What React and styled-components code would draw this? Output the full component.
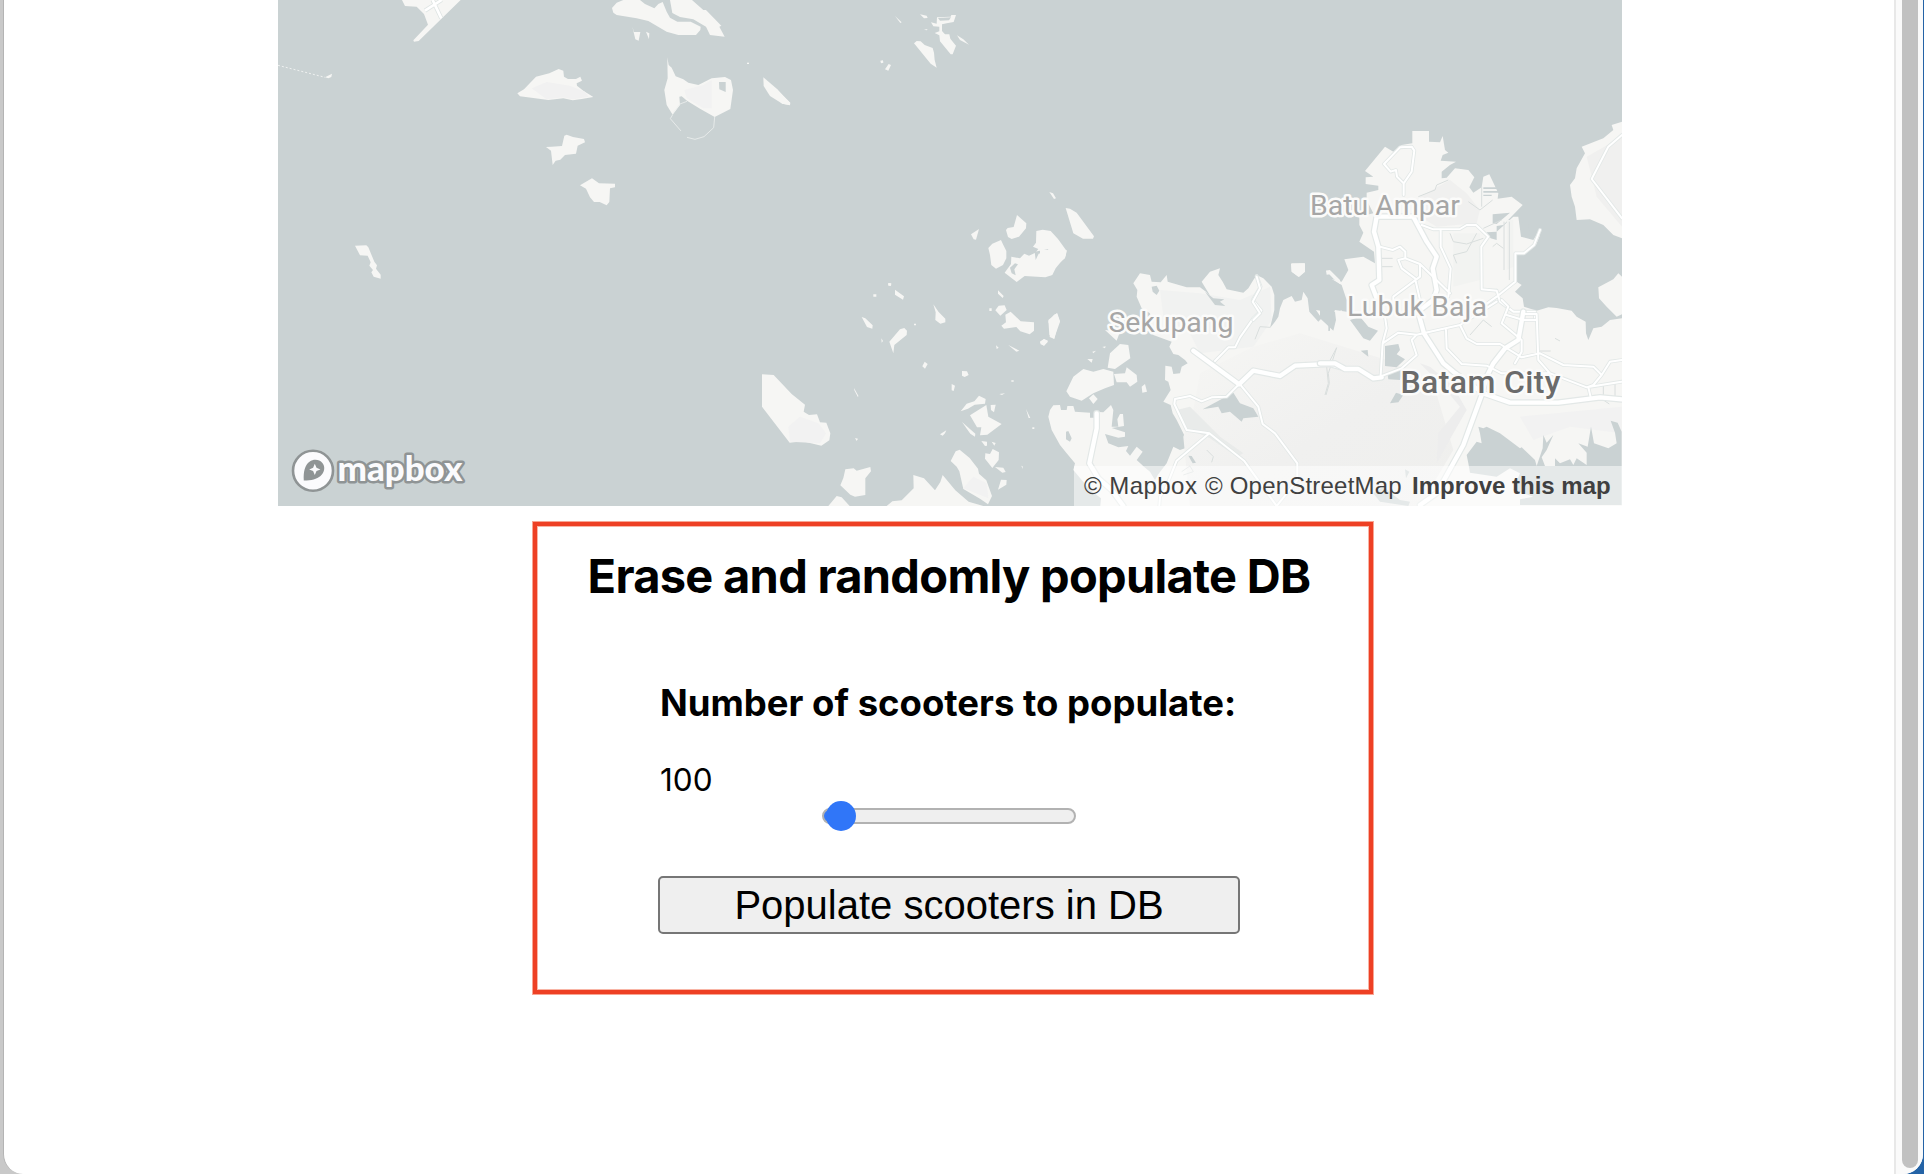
import React, { useState } from "react";
import styled, { createGlobalStyle } from "styled-components";

const GlobalStyle = createGlobalStyle`
  *, *::before, *::after { box-sizing: border-box; }
  html, body { margin: 0; padding: 0; }
  body { background: #c6c8c9; overflow: hidden; }
`;

const Desktop = styled.div`
  height: 1174px;
  padding: 0 1px 0 3px;
  background: linear-gradient(90deg, #c9c9c9 0 50%, #2463a6 50%);
`;

const Window = styled.div`
  display: flex;
  height: 100%;
  overflow: hidden;
  background: #fff;
  border-left: 1px solid #b4b4b4;
  border-radius: 0 0 20px 20px;
  font-family: Inter, "Liberation Sans", sans-serif;
  color: #000;
`;

const Page = styled.main`
  flex: 1;
  display: flex;
  flex-direction: column;
  align-items: center;
  padding-left: 2px;
`;

const ScrollTrack = styled.div`
  display: flex;
  flex-direction: column;
  width: 29px;
  padding: 0 5px 6px 6px;
  border-left: 2px solid #e8e8e8;
  background: #fafafa;
`;

const ScrollThumb = styled.div`
  flex: 1;
  background: #c1c1c1;
  border-radius: 0 0 8px 8px;
`;

const MapFrame = styled.section`
  position: relative;
  width: 1344px;
  height: 506px;
  overflow: hidden;
  background: #cad2d3;
`;

const MapDrawing = styled.svg`
  display: block;
  width: 1344px;
  height: 506px;
`;

const PlaceName = styled.text`
  font-family: Roboto, "Liberation Sans", sans-serif;
  font-size: ${(p) => (p.$city ? 32 : 28.5)}px;
  font-weight: ${(p) => (p.$city ? 500 : 400)};
  fill: ${(p) => (p.$city ? "#6b6b6b" : "#a6a6a6")};
  stroke: #fbfbfa;
  stroke-width: 5px;
  stroke-linejoin: round;
  paint-order: stroke;
`;

const Wordmark = styled.text`
  font-family: Lato, sans-serif;
  font-size: 34.5px;
  font-weight: 900;
  fill: #fbfbfd;
  stroke: #8f9495;
  stroke-width: 5px;
  stroke-linejoin: round;
  paint-order: stroke;
`;

const Attribution = styled.div`
  position: absolute;
  right: 0;
  bottom: 0;
  display: flex;
  align-items: center;
  width: 548px;
  height: 40px;
  padding-left: 10px;
  background: rgba(255, 255, 255, 0.5);
  font-family: "Liberation Sans", Arial, sans-serif;
  font-size: 24px;
  line-height: 40px;
  color: #404040;
  white-space: nowrap;
`;

const Credit = styled.span`
  letter-spacing: ${(p) => p.$track || 0}px;
  font-weight: ${(p) => (p.$strong ? 700 : 400)};
  width: ${(p) => p.$w}px;
`;

const Panel = styled.section`
  display: flex;
  flex-direction: column;
  align-items: center;
  width: 842px;
  height: 474px;
  margin: 15px 0 0 6px;
  padding: 22px 8px 0 0;
  border: 1px solid #f8a593;
  box-shadow: inset 0 0 0 4px #ee4024, inset 0 0 0 5px #f8b5a6;
`;

const Title = styled.h2`
  margin: 0;
  font-size: 47px;
  line-height: 64px;
  font-weight: 700;
  letter-spacing: -0.72px;
  white-space: nowrap;
`;

const Form = styled.div`
  display: flex;
  flex-direction: column;
  align-items: center;
  width: 582px;
  margin-top: 73px;
`;

const Field = styled.div`
  align-self: stretch;
  padding-left: 2px;
`;

const Label = styled.h3`
  margin: 0;
  font-size: 36.5px;
  line-height: 44px;
  font-weight: 700;
  letter-spacing: 0;
  white-space: nowrap;
`;

const Value = styled.div`
  margin-top: 36px;
  font-size: 31.5px;
  line-height: 38px;
`;

const Slider = styled.input`
  appearance: none;
  width: 254px;
  height: 16px;
  margin: 9px 0 0;
  border: 2px solid #b2b2b2;
  border-radius: 8px;
  background: linear-gradient(90deg, #3478f6 0 16px, #efefef 16px);
  background-origin: border-box;

  &::-webkit-slider-thumb {
    appearance: none;
    width: 30px;
    height: 30px;
    border-radius: 50%;
    background: #3076f8;
  }
`;

const Submit = styled.button`
  width: 582px;
  height: 58px;
  margin-top: 52px;
  padding: 0;
  border: 2px solid #767676;
  border-radius: 5px;
  background: #efefef;
  color: #000;
  font-family: "Liberation Sans", Arial, sans-serif;
  font-size: 40px;
  line-height: 50px;
`;

/* Each survey sheet stores its outlines at three units per pixel from its own corner. */
const sheet = (x, y) => `translate(${x} ${y}) scale(0.33333)`;

const westIslands = [
  "M396 0L405 18 440 20 462 42 474 74 430 121 432 125 446 123 572 0Z",
  "M1026 24L1040 8 1060 0 1110 0 1125 12 1153 25 1165 12 1178 6 1190 35 1200 53 1222 65 1262 65 1292 80 1291 90 1278 105 1225 105 1190 95 1135 63 1100 55 1040 45 1030 38Z",
  "M1200 0L1266 0 1300 30 1308 30 1354 77 1348 80 1364 110 1320 105 1308 80 1270 58 1230 51 1207 39Z",
  "M1087 80L1092 96 1111 96 1106 122 1096 118ZM1128 95L1138 100 1137 118Z",
  "M165 232L186 221 184 231 175 235Z",
  "M742 280L762 268 798 230 838 220 866 207 880 212 882 230 894 237 918 237 931 230 936 242 920 250 921 257 940 272 970 291 935 297 908 301 880 295 835 300 750 289Z",
  "M1192 172L1196 195 1205 203 1217 229 1240 238 1255 248 1285 255 1325 235 1365 231 1383 240 1389 270 1381 327 1334 351 1290 326 1251 302 1235 289 1228 290 1230 315 1208 344 1190 315 1183 270 1193 235Z",
  "M1480 232L1522 268 1560 308 1560 316 1537 311 1500 288 1481 258Z",
  "M828 441L845 440 876 438 883 407 890 404 909 411 942 417 945 427 923 437 918 461 885 465 871 479 857 482 848 495 843 452Z",
  "M930 556L966 535 987 550 1035 551 1035 562 1020 565 1018 606 1010 616 989 606 972 606 960 592 948 566Z",
  "M255 737L289 736 295 742 313 785 321 796 318 806 332 824 332 836 311 830 304 817 309 810 298 797 302 787 293 767 270 766Z",
  "M1431 188H1437V192H1431Z",
];

const northIslands = [
  "M0 279L31 308 30 315 7 311 0 305Z",
  "M345 48L365 67 361 69ZM420 43L440 47 443 54 432 55ZM471 52L512 50 514 45 528 45 521 66 500 70 486 73 486 93 495 103 508 103 511 116 528 137 518 163 512 163 480 124 478 106 464 99 478 94 478 80 460 79 453 67 470 71Z",
  "M402 130L410 123 422 124 434 135 458 144 462 158 464 180 470 203 452 191ZM531 106L550 118 567 134 540 120Z",
  "M301 182L309 181 310 188 303 190ZM326 192L333 195 325 212 315 208ZM432 89L443 87 440 91Z",
  "M808 576L819 580 828 595 822 597ZM857 624L870 626 890 638 942 709 939 716 909 716 880 700Z",
  "M573 703L597 687 588 719 581 718Z",
  "M711 645L739 670 738 685 717 710 695 717 684 711 678 690 683 684 701 681Z",
  "M625 744L637 731 663 720 670 735 679 753 679 775 669 795 648 806 634 795 630 765Z",
  "M769 693L788 689 812 693 834 717 860 753 857 768 827 805 817 825 796 832 734 828 710 846 674 818 693 792 694 770 720 775 733 761 747 767 766 758 775 747 759 740 768 728Z",
  "M324 850L334 850 333 858 326 856Z",
];

const straitIslands = [
  "M66 343L101 345 155 402 195 434 191 455 207 465 231 463 240 487 259 488 271 520 268 541 244 557 188 544 149 548 66 440Z",
  "M316 628L341 625 350 632 391 621 393 634 376 655 376 705 345 710 331 704 301 676 310 654ZM265 738L290 708 305 712 329 738Z",
  "M440 738L457 724 485 721 521 685 520 645 552 655 585 691 601 666 608 645 646 691 686 725 730 738Z",
  "M632 603L647 574 659 569 689 594 714 626 717 641 739 661 756 708 744 733 720 716 670 687 658 634 650 620Z",
  "M365 171L376 175 398 196 397 206 381 201ZM448 245L480 208 493 204 501 212 500 225 463 255 460 280Z",
  "M580 133L596 156 616 176 616 187 601 191 586 180 587 157ZM465 89L492 109 489 119 465 104ZM424 235L429 243 425 248ZM522 191H528V196H522ZM445 70H452V77H445ZM400 103H409V110H400Z",
  "M554 305L563 312 555 326 547 319ZM342 384L355 407 354 412 343 391ZM666 333L681 334 686 345 674 351 666 347ZM635 372L645 377 641 393 635 391Z",
  "M774 91L791 108 788 114 774 101ZM766 151L776 137 794 136 800 150 781 167ZM784 197L798 187 796 164 812 155 842 184 882 187 882 212 869 223 841 214 829 201 792 206Z",
  "M925 185L942 164 952 160 960 184 953 196 943 237 929 231 932 204ZM900 246L912 237 924 242 912 257 902 253ZM805 255L838 272 829 275ZM768 256L776 263 770 267ZM748 145H755V153H748Z",
  "M662 454L680 431 703 424 717 407 737 417 735 431 704 434 684 446ZM690 466L739 435 745 470 785 492 742 524 720 526 724 502 711 502ZM666 486L706 521 705 530 691 521ZM752 435L767 434 762 457 753 450Z",
  "M724 543L741 545 741 557 735 558ZM755 545L767 549 763 557ZM736 580L750 582 758 567 777 577 776 600 757 624 735 596ZM765 621L790 623 797 636 787 638ZM774 689L783 659 800 660 799 674Z",
  "M600 523L619 511 615 520 608 527ZM858 447L871 474 866 474ZM778 402L795 400 786 405ZM345 534L354 536 350 543ZM844 617L848 619 848 627ZM877 502H883V507H877ZM814 361H821V365H814Z",
];

const batamWest =
  "M25 500L30 480 40 466 60 465 63 480 80 480 82 468 100 468 105 485 150 488 150 503 163 503 163 485 190 487 213 465 220 480 215 530 235 530 232 508 240 492 249 492 252 528 215 534 255 547 255 560 235 563 195 552 205 580 235 592 265 588 258 603 270 617 290 590 308 605 290 630 312 650 330 665 345 690 353 675 380 640 400 590 420 600 435 595 440 570 425 540 410 510 398 490 392 465 370 455 392 420 385 395 375 390 376 347 395 350 400 372 420 370 425 350 443 340 435 330 415 315 400 312 388 290 395 275 340 255 330 190 305 175 290 140 292 120 280 100 300 70 330 75 335 95 362 97 380 75 383 95 440 112 480 112 498 125 515 145 485 95 510 65 540 55 535 75 548 95 560 118 610 128 625 115 640 90 650 75 670 85 695 110 703 135 703 180 690 234 705 215 715 200 720 175 730 150 755 138 765 155 785 150 790 125 803 145 808 185 835 215 845 205 828 180 860 185 880 205 865 225 865 243 890 240 890 190 905 180 905 775 180 775 183 745 150 720 125 690 100 660 105 640 80 610 60 585 35 540Z";
const batamWestIslets =
  "M79 424L100 380 130 357 160 365 190 357 220 365 222 405 195 415 160 430 125 452 90 440ZM203 353L210 310 240 282 265 285 271 325 225 357ZM222 372L255 370 260 352 290 375 292 395 270 410 260 397 230 397ZM147 445L160 433 173 447 160 462ZM305 410L315 402 321 425 307 428ZM142 327L158 327 155 338ZM157 305L168 302 160 310ZM187 291L197 289 195 295ZM195 240L240 245 230 272ZM754 40L795 40 795 65 777 81 755 65ZM858 62L872 62 900 90 900 102 882 88ZM25 210L50 190 60 215 42 266 28 255ZM0 275L12 267 24 275 12 287ZM0 0H80L75 25 45 50 35 75 0 80Z";

const batamNorth =
  "M330 660L345 630 380 635 380 600 365 555 335 537 365 545 385 510 373 478 430 470 465 490 462 455 418 425 430 398 418 375 418 350 460 340 440 300 440 278 475 270 475 257 437 252 437 232 460 230 435 213 495 140 520 155 545 135 577 130 577 93 627 93 627 125 660 127 668 108 675 150 685 158 668 165 662 182 708 185 690 195 665 215 665 235 680 233 705 205 745 210 763 232 748 262 760 278 785 262 790 230 808 223 835 280 833 296 875 290 908 315 850 375 830 378 830 395 880 350 895 350 903 410 940 420 960 388 960 405 948 435 925 450 890 465 890 545 905 555 885 575 908 595 912 620 950 632 985 622 1010 624 1055 632 1070 650 1097 665 1098 700 1105 720 1120 685 1145 680 1170 660 1206 655 1206 1222 330 1222Z";
const eastIslands =
  "M1206 65L1175 75 1180 90 1150 115 1085 140 1095 160 1070 205 1065 235 1050 255 1055 290 1065 320 1070 360 1110 358 1150 375 1180 405 1206 415ZM1206 530L1195 520 1180 538 1135 562 1137 595 1160 620 1175 635 1190 650 1206 643ZM213 492L253 490 255 515 235 530 215 515ZM318 512L330 510 335 522 320 524Z";

const southWater =
  "M475 380L490 385 500 380 540 400 600 445 605 442 645 480 650 498 668 445 670 405 680 428 700 405 680 450 665 472 675 498 705 498 705 475 720 490 750 478 760 495 770 475 800 495 800 458 775 430 803 440 813 380 822 430 865 445 890 430 885 398 872 362 893 368 905 395 905 615 600 615 600 598 640 590 580 570 600 520 570 505 530 530 450 518 445 490 440 465 470 425 485 430 480 400Z";
const innerWater =
  "M0 30L45 35 48 60 40 92 0 55ZM90 60L120 50 145 80 174 92 150 122 130 115ZM195 138L235 132 240 150 230 163 255 178 230 202 195 198ZM203 225L250 205 240 240 205 238ZM210 310L228 278 250 285 235 307ZM122 152L143 150 145 170ZM255 508L268 515 258 535ZM160 580L190 560 220 585 240 600 270 605 265 618 180 605Z";

const minorRoads = {
  west: "M650 78L662 110 638 150 664 182 640 205 600 262 585 292 565 292 525 333M597 403L560 440 515 442 485 454 450 438 405 447 403 462 440 540 508 550M508 550L612 632 710 768 772 690 772 640 705 550 668 522 655 470 600 403M508 550L410 632 375 720 360 740 358 768",
  north:
    "M551 285V250L531 230 528 210 512 215 492 192 540 142 575 140 583 152 575 215 551 250M605 375L640 388 720 387 740 375 768 375 805 410 784 440 785 568 830 572M662 390L662 440 692 505 685 590M480 440L518 450 540 440 556 455 556 475 535 480 545 505 565 520M556 475L600 492 690 580M600 495L600 530 520 590 520 620M565 520L585 535 600 600M960 390L942 435 912 460 886 460 886 545 830 590 760 640M830 572L840 605 880 635 945 635 945 655M1206 105L1165 140 1115 237 1206 355M110 530L120 565 98 605 120 640 100 660",
  south:
    "M195 50L200 85 188 130 182 225M188 130L235 98 290 104 420 75 530 5M378 90L380 145 425 192 500 197 545 220 690 220 800 262 905 245M420 75L440 115 470 132 540 132 605 172 660 160 730 195 820 200 845 225 870 185 905 180M545 0L565 20 545 70 605 120 605 155 585 190M610 42H650L655 180 690 220M800 262L820 255 845 225M805 262L812 292M560 45L610 60H650M290 104L275 120 290 165 245 205 180 230",
};
const majorRoads = {
  west: "M460 302L597 403 640 362 720 378 765 347 870 342 905 352M170 490V535L148 640 175 685 215 720 250 768",
  north: "M470 350L462 395 475 440 478 540 455 555 470 595M470 350H580L620 425 650 470 638 505 650 570 640 600 600 630",
  south: "M0 190L45 190 75 207 115 207 160 235 185 232M298 50L312 100 370 190 400 215 490 280 570 308 715 308 840 292 905 298M300 615L350 580 430 435 485 285 500 230 520 190 555 145 595 120 610 35",
};

function RoadSet({ at, minor, major }) {
  return (
    <g transform={at} fill="none" strokeLinejoin="round" strokeLinecap="round">
      <path d={minor} stroke="#e3e8e7" strokeWidth="11" />
      <path d={major} stroke="#e3e8e7" strokeWidth="20" />
      <path d={minor} stroke="#fff" strokeWidth="6" />
      <path d={major} stroke="#fff" strokeWidth="13" />
    </g>
  );
}

function MapArt() {
  return (
    <MapDrawing viewBox="278 0 1344 506" role="img" aria-label="Map">
      <defs>
        <linearGradient id="relief" x1="0" y1="0" x2="1" y2="1">
          <stop offset="0" stopColor="#f6f6f4" />
          <stop offset="0.55" stopColor="#f0f0ef" />
          <stop offset="1" stopColor="#efefed" />
        </linearGradient>
      </defs>
      <g fill="#f6f6f4">
        <g transform={sheet(270, 0)}>
          {westIslands.map((d) => <path key={d} d={d} />)}
          <path d="M785 265L830 246 900 257 945 275 955 290 910 298 880 292 830 298Z" fill="#f1f1f1" />
          <path d="M1243 270L1300 255 1325 240 1325 325 1300 325 1250 295Z" fill="#f2f2f2" />
          <path d="M1347 246H1367V276L1348 268Z" fill="#cad2d3" />
          <path d="M1208 344L1201 356 1233 393M1251 412L1275 418 1302 410 1331 383 1334 351M1208 340L1230 312 1251 304" fill="none" stroke="#eef0ef" strokeWidth="2.4" />
          <path d="M24 196L165 232" fill="none" stroke="#eff1f0" strokeWidth="3" strokeDasharray="6 6" />
          <path d="M465 32L515 0M488 0L514 55" fill="none" stroke="#dfe5e4" strokeWidth="13" />
          <path d="M465 32L515 0M488 0L514 55" fill="none" stroke="#fff" strokeWidth="8" />
        </g>
        <g transform={sheet(780, 0)}>
          {northIslands.map((d) => <path key={d} d={d} />)}
          <path d="M705 790L714 793 703 808 707 826 695 820 690 803ZM764 755L804 748 806 753 776 761 767 780ZM474 54L513 52 507 61 480 62Z" fill="#cad2d3" />
        </g>
        <g transform={sheet(740, 260)}>
          {straitIslands.map((d) => <path key={d} d={d} />)}
          <path d="M145 500L180 470 235 490 258 520 240 550 150 545ZM670 685L700 650 740 670 745 715Z" fill="#f2f2f2" />
        </g>
        <g transform={sheet(1040, 250)}>
          <path d={batamWest} />
          <path d={batamWestIslets} />
          <path d="M360 120L480 130 600 150 690 110 695 210 640 290 480 310 450 250 370 200Z" fill="#f1f2f1" />
        </g>
        <g transform={sheet(1220, 100)}>
          <path d={batamNorth} />
          <path d={eastIslands} />
          <path d="M600 290L690 240 740 280 780 330 770 370 650 380 600 350ZM1100 170L1206 110V380L1130 290Z" fill="#f0f0ef" />
          <path d="M700 400L780 400 780 540 700 560ZM860 360L880 360V500L860 510Z" fill="#f2f3f1" />
          <path d="M790 262H832V267H790ZM790 273H836V278H790ZM790 284H815V288H790ZM818 343L870 338 830 372 818 370ZM800 397L830 395V420L812 415ZM903 365L925 375 930 405 905 400Z" fill="#cad2d3" />
        </g>
        <g transform={sheet(1040, 250)}>
          <path d="M480 370L640 290 780 250 1040 330 1180 400 1240 600 1140 768H450L430 560 460 480Z" fill="url(#relief)" />
          <path d="M410 480L450 470 540 560 610 610 590 620 510 565 440 535Z" fill="#e9ebea" />
          <path d="M488 478L530 455 580 428 600 460 640 475 655 500 610 505 605 515 570 485 545 490 535 470ZM78 545L85 543 95 565 90 575 78 568ZM445 617L455 618 468 638 458 640ZM335 110L350 107 358 122 350 135 338 125ZM495 125L520 145 553 148 540 155 556 168 525 165Z" fill="#cad2d3" />
        </g>
        <g transform={sheet(1320, 300)}>
          <path d="M300 190L330 200 400 260 440 330 400 400 350 490 355 400 420 320 370 260Z" fill="#ededed" />
          <path d="M600 350L905 320V400L750 380 640 420Z" fill="#f2f2f2" />
          <path d={southWater} fill="#cad2d3" />
          <path d={innerWater} fill="#cad2d3" />
        </g>
      </g>
      <g fill="none" stroke="#d9dedd" strokeWidth="3">
        <path transform={sheet(1220, 100)} d="M595 290L645 270 650 255 685 240M690 400L700 425 740 432 790 415M770 400L740 455 700 465 710 490M852 365V510M868 365V540M818 440L830 430 850 445M485 500H518M485 475H518M785 260V320M745 305L780 330 818 300M790 385L845 360" />
        <path transform={sheet(1040, 250)} d="M645 268L660 230 690 232M890 293L865 370 868 400 858 435M500 600L520 620 515 637M425 665L450 648 460 665 430 675" />
        <path transform={sheet(1320, 300)} d="M50 143L20 200 25 250 15 285M450 105L490 60 515 80M660 153H692M850 250V290M885 250V290M835 290L868 312M705 115L720 123" />
      </g>
      <RoadSet at={sheet(1040, 250)} minor={minorRoads.west} major={majorRoads.west} />
      <RoadSet at={sheet(1220, 100)} minor={minorRoads.north} major={majorRoads.north} />
      <RoadSet at={sheet(1320, 300)} minor={minorRoads.south} major={majorRoads.south} />
      <PlaceName x="1310" y="214.8" textLength="150">Batu Ampar</PlaceName>
      <PlaceName x="1347" y="315.8" textLength="140">Lubuk Baja</PlaceName>
      <PlaceName x="1108.5" y="331.5" textLength="125">Sekupang</PlaceName>
      <PlaceName $city x="1400.5" y="392.7" textLength="160">Batam City</PlaceName>
      <circle cx="313" cy="470.7" r="20" fill="#fbfbfd" stroke="#8f9495" strokeWidth="2.6" />
      <path d="M303.8 480.5C303.2 471.5 305 465 309.5 461.8C314 458.6 319.5 459.6 322.4 463C325.5 466.7 324.6 472.6 320.5 476C316.8 479.2 311.5 480.5 303.8 480.5Z" fill="#8f9495" />
      <path d="M314.8 463.8L316.5 467.7 320.4 469.4 316.5 471.1 314.8 475 313.1 471.1 309.2 469.4 313.1 467.7Z" fill="#fbfbfd" />
      <Wordmark x="337.5" y="480.8" textLength="125" lengthAdjust="spacingAndGlyphs">mapbox</Wordmark>
    </MapDrawing>
  );
}

export default function App() {
  const [count, setCount] = useState(100);
  return (
    <>
      <GlobalStyle />
      <Desktop>
        <Window>
          <Page>
            <MapFrame>
              <MapArt />
              <Attribution>
                <Credit $w={121} $track={0.45}>© Mapbox</Credit>
                <Credit $w={207} $track={0.2}>© OpenStreetMap</Credit>
                <Credit $strong $w={200}>Improve this map</Credit>
              </Attribution>
            </MapFrame>
            <Panel>
              <Title>Erase and randomly populate DB</Title>
              <Form>
                <Field>
                  <Label>Number of scooters to populate:</Label>
                  <Value>{count}</Value>
                </Field>
                <Slider
                  type="range"
                  min="80"
                  max="2000"
                  value={count}
                  onChange={(e) => setCount(Number(e.target.value))}
                />
                <Submit>Populate scooters in DB</Submit>
              </Form>
            </Panel>
          </Page>
          <ScrollTrack>
            <ScrollThumb />
          </ScrollTrack>
        </Window>
      </Desktop>
    </>
  );
}
